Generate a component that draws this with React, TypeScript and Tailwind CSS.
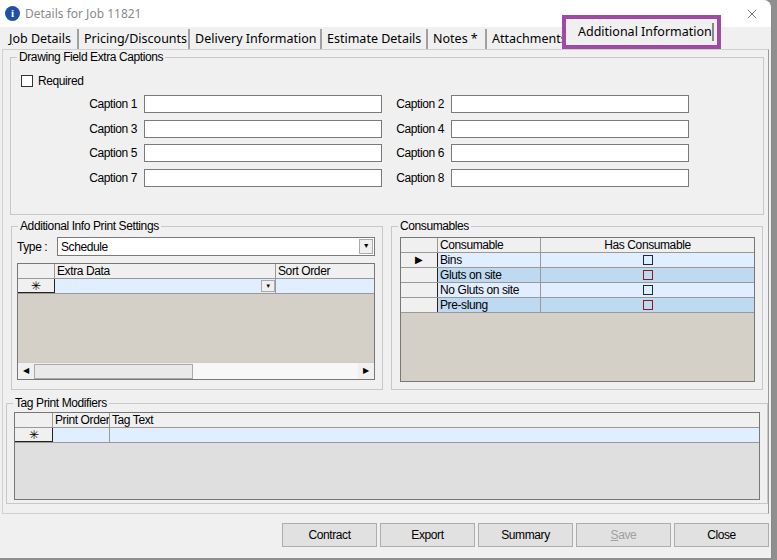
import { X } from "lucide-react";

const narrow = { fontFamily: '"Liberation Sans", Arial, sans-serif', letterSpacing: "-0.4px" };

const Group = ({ title, className, children }: { title: string; className: string; children?: React.ReactNode }) => (
  <div className={`relative border border-[#c8c8c8] ${className}`}>
    <span className="absolute -top-[8px] left-[6px] bg-[#f0f0f0] px-[2px] text-[12px] leading-[14px] text-black">{title}</span>
    {children}
  </div>
);

const Caption = ({ n }: { n: number }) => (
  <div className="flex items-center h-[18px]">
    <span className="w-[80px] pr-[7px] text-right text-[12px]">Caption {n}</span>
    <div className="w-[238px] h-[18px] bg-white border border-[#7a7a7a]" />
  </div>
);

const Box = ({ red }: { red?: boolean }) => (
  <div className={`w-[10px] h-[10px] border ${red ? "border-[#8b1a1a]" : "border-[#1a2a3a]"}`} />
);

const tabs: [string, number][] = [
  ["Job Details", 75],
  ["Pricing/Discounts", 111],
  ["Delivery Information", 132],
  ["Estimate Details", 106],
  ["Notes *", 59],
  ["Attachments", 78],
];

export default function App() {
  const cons = ["Bins", "Gluts on site", "No Gluts on site", "Pre-slung"];
  return (
    <div className="w-[777px] h-[560px] bg-[#8f8f8f] overflow-hidden text-black" style={narrow}>
      <div className="w-[772px] h-[558px] bg-[#f0f0f0] rounded-tr-[8px] border-r border-[#888] flex flex-col">
        {/* Title bar */}
        <div className="h-[27px] bg-white flex items-center px-[5px] rounded-tr-[8px]" style={{ letterSpacing: 0 }}>
          <div className="w-[15px] h-[15px] rounded-full bg-[#1f4fa8] text-white text-[11px] font-bold flex items-center justify-center" style={{ fontFamily: "serif" }}>i</div>
          <span className="ml-[5px] text-[12px] text-[#8a8a8a]" style={{ fontFamily: '"Noto Sans", sans-serif' }}>Details for Job 11821</span>
          <X className="ml-auto mr-[6px] w-[16px] h-[16px] text-[#555]" strokeWidth={1.2} />
        </div>
        {/* Tabs */}
        <div className="h-[22px] flex items-end text-[12.5px] pl-[4px] whitespace-nowrap" style={{ fontFamily: '"Noto Sans", sans-serif', letterSpacing: 0 }}>
          {tabs.map(([t, w], i) => (
            <div key={t} className="pl-[5px] h-[20px] leading-[20px] border-r-2 border-[#a0a0a0] overflow-hidden shrink-0" style={{ width: w }}>
              {i === 0 ? <><span className="underline">J</span>ob Details</> : t}
            </div>
          ))}
          <div className="relative -ml-[3px] -mt-[8px] h-[34px] w-[159px] shrink-0 border-[4px] border-[#a04aa6] flex items-center pl-[12px] bg-[#f0f0f0]">
            Additional Information
            <div className="absolute right-[3px] top-[4px] h-[18px] w-[2px] bg-[#888]" />
          </div>
        </div>
        {/* Tab panel */}
        <div className="mx-[2px] h-[465px] border border-[#d0d0d0] border-r-[#999] bg-[#f0f0f0] pt-[7px] px-[5px]">
          <Group title="Drawing Field Extra Captions" className="w-[754px] h-[158px] ml-[2px]">
            <div className="flex items-center gap-[5px] mt-[14px] ml-[10px] text-[12px]">
              <div className="w-[12px] h-[12px] bg-white border border-[#333]" />
              <span>Required</span>
            </div>
            <div className="grid grid-cols-[320px_320px] gap-y-[6.5px] ml-[53px] mt-[5px]">
              {[1, 2, 3, 4, 5, 6, 7, 8].map((n) => (
                <div key={n} className={n % 2 === 0 ? "-ml-[13px]" : ""}>
                  <Caption n={n} />
                </div>
              ))}
            </div>
          </Group>
          <div className="flex gap-[8px] mt-[11px] ml-[3px]">
            <Group title="Additional Info Print Settings" className="w-[373px] h-[164px]">
              <div className="flex items-center mt-[10px] ml-[5px] text-[12px]">
                <span className="w-[40px]">Type :</span>
                <div className="w-[318px] h-[19px] bg-white border border-[#7a7a7a] flex items-center pl-[3px]">
                  Schedule
                  <div className="ml-auto w-[14px] h-[15px] mr-[1px] bg-[#f0f0f0] border border-[#aaa] flex items-center justify-center text-[7px]">▼</div>
                </div>
              </div>
              <div className="ml-[5px] mt-[7px] w-[358px] h-[117px] border border-[#777] bg-[#d4d0c8] flex flex-col text-[12px]">
                <div className="flex h-[15px] bg-[#f0f0f0] border-b border-[#999] leading-[14px]">
                  <div className="w-[37px] border-r border-[#999]" />
                  <div className="w-[221px] border-r border-[#999] pl-[2px]">Extra Data</div>
                  <div className="flex-1 pl-[2px]">Sort Order</div>
                </div>
                <div className="flex h-[15px] bg-[#e1eeff] border-b border-[#999]">
                  <div className="w-[37px] bg-[#f0f0f0] border-r border-b border-[#222] text-center leading-[14px]">✳</div>
                  <div className="w-[221px] border-r border-[#999] flex justify-end items-center">
                    <div className="w-[14px] h-[12px] bg-[#f0f0f0] border border-[#aaa] text-[6px] flex items-center justify-center">▼</div>
                  </div>
                  <div className="flex-1" />
                </div>
                <div className="flex-1" />
                <div className="h-[17px] flex bg-[#f0f0f0] border-t border-[#ccc] items-center text-[8px]">
                  <div className="w-[16px] text-center">◀</div>
                  <div className="w-[159px] h-[15px] bg-[#e9e9e9] border border-[#aaa]" />
                  <div className="flex-1 h-full bg-[#f7f7f7]" />
                  <div className="w-[16px] text-center">▶</div>
                </div>
              </div>
            </Group>
            <Group title="Consumables" className="w-[373px] h-[164px]">
              <div className="ml-[8px] mt-[10px] w-[355px] h-[145px] border border-[#777] bg-[#d4d0c8] text-[12px] leading-[14px]">
                <div className="flex h-[15px] bg-[#f0f0f0] border-b border-[#999]">
                  <div className="w-[37px] border-r border-[#999]" />
                  <div className="w-[103px] border-r border-[#999] pl-[2px]">Consumable</div>
                  <div className="flex-1 text-center">Has Consumable</div>
                </div>
                {cons.map((c, i) => (
                  <div key={c} className={`flex h-[15px] border-b border-[#999] ${i % 2 ? "bg-[#bedaf0]" : "bg-[#e1eeff]"}`}>
                    <div className="w-[37px] bg-[#f0f0f0] border-r border-[#222] flex items-center justify-center text-[10px]">{i === 0 ? "▶" : ""}</div>
                    <div className="w-[103px] border-r border-[#999] pl-[2px]">{c}</div>
                    <div className="flex-1 flex items-center justify-center"><Box red={i % 2 === 1} /></div>
                  </div>
                ))}
              </div>
            </Group>
          </div>
          <Group title="Tag Print Modifiers" className="w-[762px] h-[101px] mt-[13px] -ml-[2px]">
            <div className="ml-[7px] mt-[8px] w-[746px] h-[88px] border border-[#777] bg-[#dfdfdf] text-[12px] leading-[14px] whitespace-nowrap">
              <div className="flex h-[15px] bg-[#f0f0f0] border-b border-[#999]">
                <div className="w-[38px] border-r border-[#999]" />
                <div className="w-[57px] border-r border-[#999] pl-[2px] overflow-hidden">Print Order</div>
                <div className="flex-1 pl-[2px]">Tag Text</div>
              </div>
              <div className="flex h-[15px] bg-[#e1eeff] border-b border-[#999]">
                <div className="w-[38px] bg-[#f0f0f0] border-r border-b border-[#222] text-center">✳</div>
                <div className="w-[57px] border-r border-[#999]" />
              </div>
            </div>
          </Group>
        </div>
        {/* Buttons */}
        <div className="flex justify-end gap-[3px] mt-[9px] pr-[2px] text-[12px]">
          {["Contract", "Export", "Summary", "Save", "Close"].map((b) => (
            <div key={b} className={`w-[95px] h-[24px] border border-[#adadad] bg-[#e1e1e1] flex items-center justify-center ${b === "Save" ? "text-[#a0a0a0]" : ""}`}>
              {b === "Save" ? <><span className="underline">S</span>ave</> : b}
            </div>
          ))}
        </div>
      </div>
    </div>
  );
}
